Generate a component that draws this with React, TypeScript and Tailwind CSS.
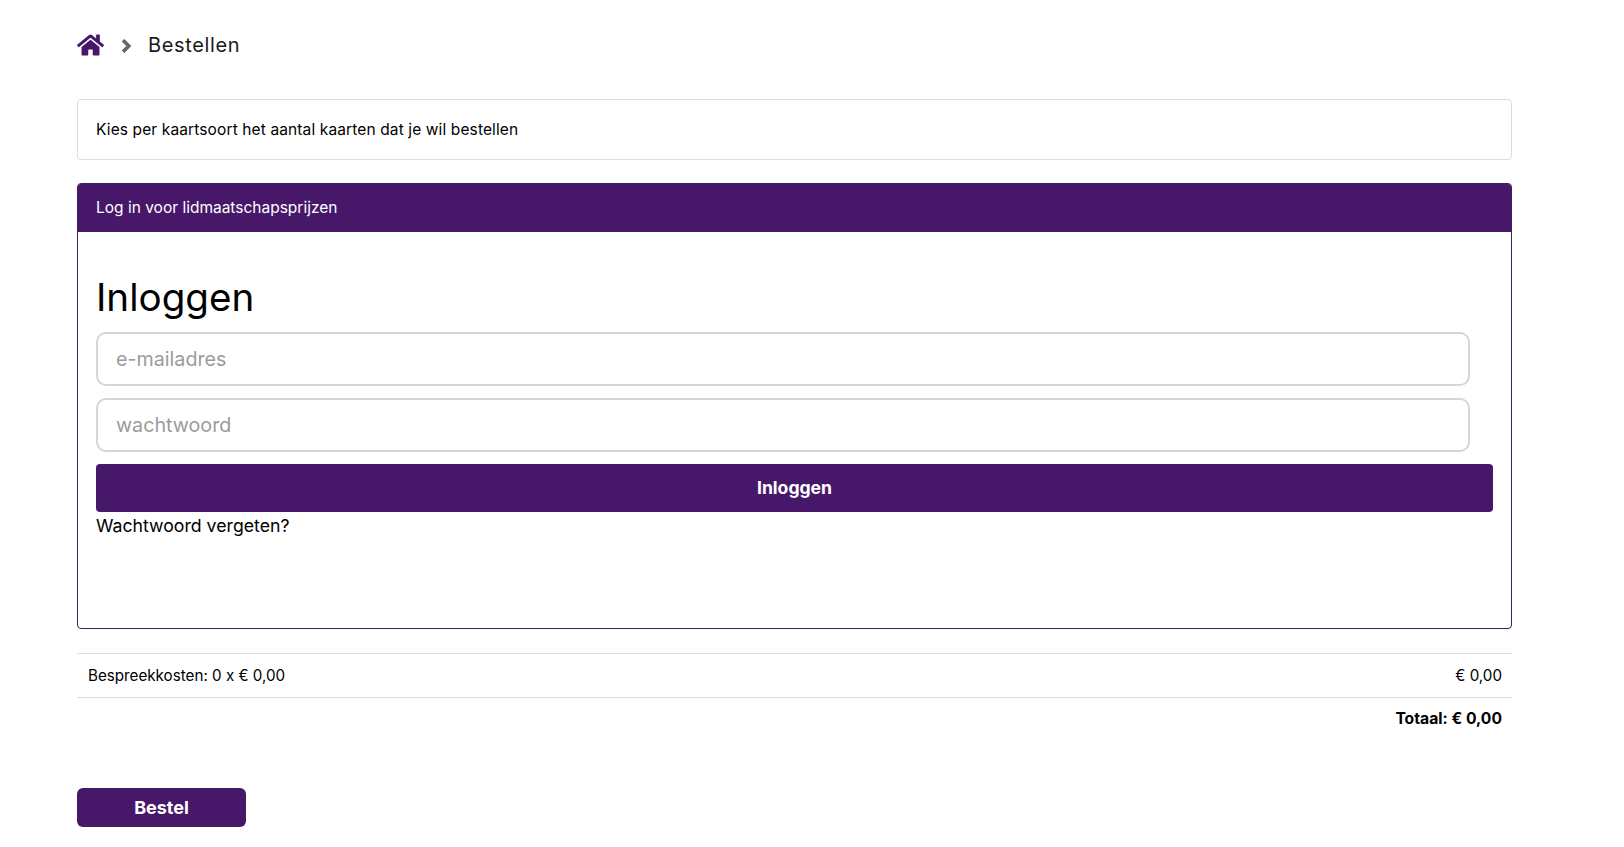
import React from 'react';
import { FaHome } from 'react-icons/fa';

const font = "font-['Inter','Noto_Sans',sans-serif]";

function LoginField({ placeholder, type }: { placeholder: string; type: string }) {
  return (
    <input
      type={type}
      placeholder={placeholder}
      className="block h-[54px] w-[1374px] rounded-[10px] border-2 border-[#d6d6d6] bg-white px-[18px] text-[19.7px] text-black outline-none placeholder:text-[#9b9b9b]"
    />
  );
}

export default function App() {
  return (
    <div className={`${font} min-h-[847px] bg-white px-[77px] pt-[32px] text-black`}>
      <nav className="flex h-[26px] w-[1435px] items-center">
        <FaHome className="h-[24px] w-[27px] text-[#47186a]" />
        <svg viewBox="0 0 11 14" className="mt-[2px] ml-[17px] h-[14px] w-[11px]" fill="none">
          <path d="M2 1.2 L7.8 7 L2 12.8" stroke="#666666" strokeWidth="3.6" />
        </svg>
        <span className="ml-[16px] text-[20px] tracking-[0.65px] text-[#1a1a1a]">Bestellen</span>
      </nav>

      <div className="mt-[41px] flex h-[61px] w-[1435px] items-center rounded-[4px] border border-[#dddddd] px-[18px] pt-[1px] text-[15.5px] tracking-[0.12px]">
        Kies per kaartsoort het aantal kaarten dat je wil bestellen
      </div>

      <section className="mt-[23px] h-[446px] w-[1435px] rounded-[4px] border border-[#38225f]">
        <header className="flex h-[48px] items-center rounded-t-[3px] bg-[#47186a] px-[18px] text-[15.5px] text-white">
          Log in voor lidmaatschapsprijzen
        </header>
        <div className="px-[18px] pt-[37px]">
          <h1 className="text-[38.6px] leading-[56px] font-normal">Inloggen</h1>
          <form className="mt-[7px] flex flex-col gap-[12px]">
            <LoginField type="email" placeholder="e-mailadres" />
            <LoginField type="password" placeholder="wachtwoord" />
            <button
              type="button"
              className="h-[48px] w-[1397px] rounded-[4px] bg-[#47186a] text-[17.6px] font-bold text-white"
            >
              Inloggen
            </button>
          </form>
          <a className="block text-[17.7px] leading-[28px]">Wachtwoord vergeten?</a>
        </div>
      </section>

      <div className="mt-[24px] w-[1435px] text-[15.2px]">
        <div className="flex h-[45px] items-center justify-between border-y border-[#dddddd] pt-[1px] pr-[10px] pl-[11px]">
          <span>Bespreekkosten: 0 x € 0,00</span>
          <span>€ 0,00</span>
        </div>
        <div className="flex h-[42px] items-center justify-end px-[10px] text-[15.7px] font-bold">
          Totaal: € 0,00
        </div>
      </div>

      <button
        type="button"
        className="mt-[48px] h-[39px] w-[169px] rounded-[6px] bg-[#47186a] text-[18px] font-bold text-white"
      >
        Bestel
      </button>
    </div>
  );
}
